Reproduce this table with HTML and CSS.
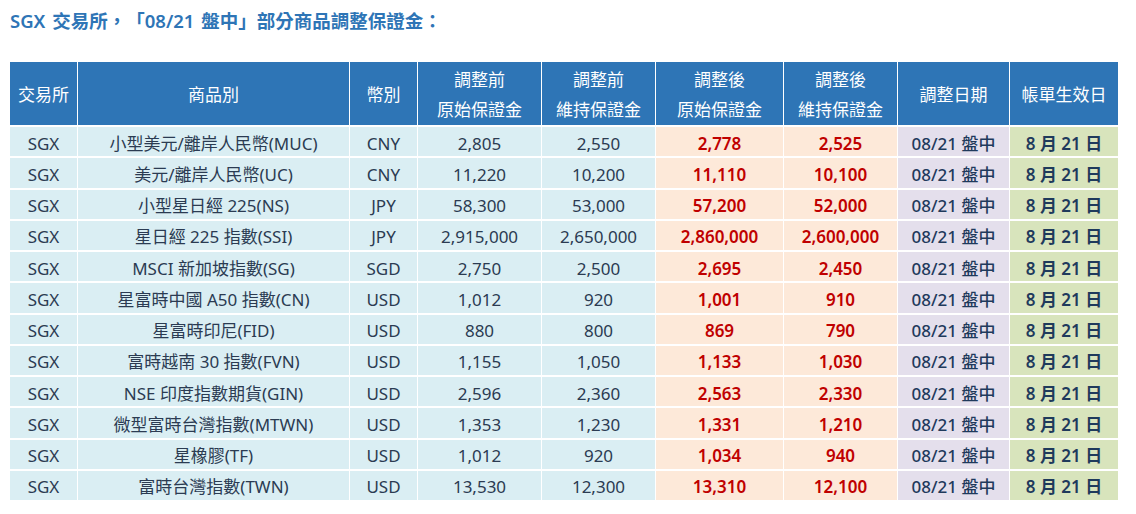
FILE: index.html
```html
<!DOCTYPE html>
<html lang="zh-TW">
<head>
<meta charset="utf-8">
<title>SGX 保證金調整</title>
<link rel="stylesheet" href="styles.css">
</head>
<body>
<div class="page">
  <h1 class="title">SGX 交易所，「08/21 盤中」部分商品調整保證金：</h1>
  <table class="margin-table">
    <colgroup>
      <col class="c-ex"><col class="c-prod"><col class="c-cur"><col class="c-n1"><col class="c-n2"><col class="c-n3"><col class="c-n4"><col class="c-date"><col class="c-eff">
    </colgroup>
    <thead>
      <tr>
        <th>交易所</th>
        <th>商品別</th>
        <th>幣別</th>
        <th>調整前<br>原始保證金</th>
        <th>調整前<br>維持保證金</th>
        <th>調整後<br>原始保證金</th>
        <th>調整後<br>維持保證金</th>
        <th>調整日期</th>
        <th>帳單生效日</th>
      </tr>
    </thead>
    <tbody>
      <tr><td>SGX</td><td>小型美元/離岸人民幣(MUC)</td><td>CNY</td><td>2,805</td><td>2,550</td><td class="new">2,778</td><td class="new">2,525</td><td class="date">08/21 盤中</td><td class="eff">8 月 21 日</td></tr>
      <tr><td>SGX</td><td>美元/離岸人民幣(UC)</td><td>CNY</td><td>11,220</td><td>10,200</td><td class="new">11,110</td><td class="new">10,100</td><td class="date">08/21 盤中</td><td class="eff">8 月 21 日</td></tr>
      <tr><td>SGX</td><td>小型星日經 225(NS)</td><td>JPY</td><td>58,300</td><td>53,000</td><td class="new">57,200</td><td class="new">52,000</td><td class="date">08/21 盤中</td><td class="eff">8 月 21 日</td></tr>
      <tr><td>SGX</td><td>星日經 225 指數(SSI)</td><td>JPY</td><td>2,915,000</td><td>2,650,000</td><td class="new">2,860,000</td><td class="new">2,600,000</td><td class="date">08/21 盤中</td><td class="eff">8 月 21 日</td></tr>
      <tr><td>SGX</td><td>MSCI 新加坡指數(SG)</td><td>SGD</td><td>2,750</td><td>2,500</td><td class="new">2,695</td><td class="new">2,450</td><td class="date">08/21 盤中</td><td class="eff">8 月 21 日</td></tr>
      <tr><td>SGX</td><td>星富時中國 A50 指數(CN)</td><td>USD</td><td>1,012</td><td>920</td><td class="new">1,001</td><td class="new">910</td><td class="date">08/21 盤中</td><td class="eff">8 月 21 日</td></tr>
      <tr><td>SGX</td><td>星富時印尼(FID)</td><td>USD</td><td>880</td><td>800</td><td class="new">869</td><td class="new">790</td><td class="date">08/21 盤中</td><td class="eff">8 月 21 日</td></tr>
      <tr><td>SGX</td><td>富時越南 30 指數(FVN)</td><td>USD</td><td>1,155</td><td>1,050</td><td class="new">1,133</td><td class="new">1,030</td><td class="date">08/21 盤中</td><td class="eff">8 月 21 日</td></tr>
      <tr><td>SGX</td><td>NSE 印度指數期貨(GIN)</td><td>USD</td><td>2,596</td><td>2,360</td><td class="new">2,563</td><td class="new">2,330</td><td class="date">08/21 盤中</td><td class="eff">8 月 21 日</td></tr>
      <tr><td>SGX</td><td>微型富時台灣指數(MTWN)</td><td>USD</td><td>1,353</td><td>1,230</td><td class="new">1,331</td><td class="new">1,210</td><td class="date">08/21 盤中</td><td class="eff">8 月 21 日</td></tr>
      <tr><td>SGX</td><td>星橡膠(TF)</td><td>USD</td><td>1,012</td><td>920</td><td class="new">1,034</td><td class="new">940</td><td class="date">08/21 盤中</td><td class="eff">8 月 21 日</td></tr>
      <tr><td>SGX</td><td>富時台灣指數(TWN)</td><td>USD</td><td>13,530</td><td>12,300</td><td class="new">13,310</td><td class="new">12,100</td><td class="date">08/21 盤中</td><td class="eff">8 月 21 日</td></tr>
    </tbody>
  </table>
</div>
</body>
</html>
```

FILE: styles.css
```css
html, body {
  margin: 0;
  padding: 0;
  background: #ffffff;
}

body {
  font-family: "Noto Sans", "Noto Sans CJK TC", sans-serif;
  color: #2b3b52;
  text-spacing-trim: space-all;
}

.page {
  padding: 9px 10px 0 10px;
}

.title {
  margin: 0;
  font-size: 18.5px;
  line-height: 24px;
  font-weight: 600;
  color: #2e75b6;
  font-family: "Noto Sans", "Noto Sans CJK TC", sans-serif;
  text-spacing-trim: space-all;
  word-spacing: 2px;
}

.margin-table {
  margin-top: 29px;
  width: 1108px;
  table-layout: fixed;
  border-collapse: separate;
  border-spacing: 0;
  font-size: 17px;
}

.c-ex { width: 67px; }
.c-prod { width: 272px; }
.c-cur { width: 68px; }
.c-n1 { width: 124px; }
.c-n2 { width: 114px; }
.c-n3 { width: 128px; }
.c-n4 { width: 114px; }
.c-date { width: 112px; }
.c-eff { width: 109px; }

.margin-table th,
.margin-table td {
  box-sizing: border-box;
  padding: 0;
  text-align: center;
  white-space: nowrap;
  border-left: 1px solid #ffffff;
  border-bottom: 2px solid #ffffff;
}

.margin-table tr > :first-child { border-left: none; }

.margin-table th {
  background: #2e75b6;
  color: #ffffff;
  font-weight: 400;
  height: 65px;
  padding-top: 3px;
  line-height: 30px;
}

.margin-table td {
  background: #daeef3;
  height: 31.25px;
  padding-top: 4px;
  line-height: 22px;
}

.margin-table tbody tr:last-child td { border-bottom: none; height: 29.25px; }

.margin-table td.new {
  background: #fde9d9;
  color: #c00000;
  font-weight: 600;
}

.margin-table td.date {
  background: #e4dfec;
  color: #1f3a5c;
  font-weight: 500;
}

.margin-table td.eff {
  background: #d8e4bc;
  color: #1f3a5c;
  font-weight: 600;
}
```
